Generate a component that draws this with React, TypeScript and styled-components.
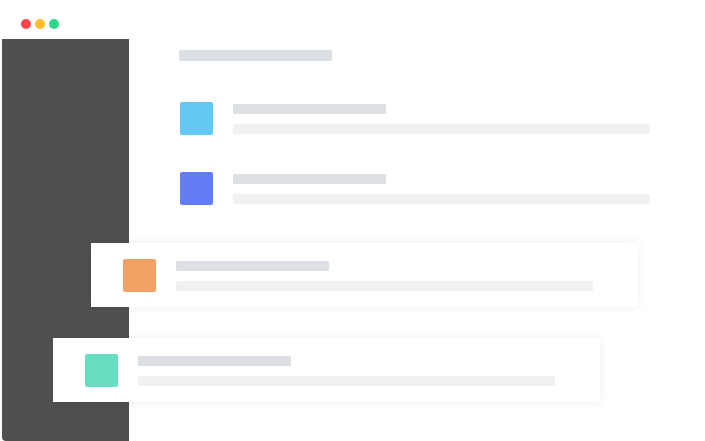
import React from "react";
import styled, { createGlobalStyle } from "styled-components";

const Global = createGlobalStyle`
  html, body { margin: 0; padding: 0; background: #ffffff; }
  body { font-family: "Liberation Sans", Arial, sans-serif; overflow: hidden; }
`;

const Window = styled.div`
  width: 705px;
  height: 441px;
  display: flex;
  flex-direction: column;
  background: #ffffff;
  overflow: hidden;
`;

const TitleBar = styled.div`
  height: 39px;
  display: flex;
  align-items: center;
  gap: 4px;
  padding: 9px 0 0 21px;
  box-sizing: border-box;
`;

const Dot = styled.span<{ $color: string }>`
  width: 10px;
  height: 10px;
  border-radius: 50%;
  background: ${(p) => p.$color};
`;

const Body = styled.div`
  flex: 1;
  display: flex;
  padding-left: 2px;
`;

const Sidebar = styled.aside`
  width: 127px;
  flex-shrink: 0;
  background: #505052;
  border-bottom-left-radius: 4px;
`;

const Main = styled.main`
  flex: 1;
  display: flex;
  flex-direction: column;
  align-items: flex-start;
  padding-top: 11px;
`;

const Heading = styled.div`
  width: 153px;
  height: 11px;
  background: #dce0e4;
  margin-left: 50px;
  border-radius: 1px;
`;

const Card = styled.div<{ $offset: number; $top: number; $raised?: boolean }>`
  position: relative;
  width: 547px;
  height: 64px;
  box-sizing: border-box;
  margin-left: ${(p) => p.$offset}px;
  margin-top: ${(p) => p.$top}px;
  padding: 0 45px 0 32px;
  display: flex;
  align-items: center;
  gap: 20px;
  background: ${(p) => (p.$raised ? "#ffffff" : "transparent")};
  box-shadow: ${(p) => (p.$raised ? "0 0 10px rgba(0, 0, 0, 0.07)" : "none")};
`;

const Swatch = styled.div<{ $color: string }>`
  width: 33px;
  height: 33px;
  flex-shrink: 0;
  border-radius: 2px;
  background: ${(p) => p.$color};
`;

const Lines = styled.div`
  flex: 1;
  display: flex;
  flex-direction: column;
  gap: 10px;
  margin-top: 1px;
`;

const TitleLine = styled.div`
  width: 153px;
  height: 10px;
  background: #dce0e4;
  border-radius: 1px;
`;

const TextLine = styled.div`
  width: 100%;
  height: 10px;
  background: #f0f1f3;
  border-radius: 1px;
`;

const rows = [
  { color: "#62c8f4", offset: 19, top: 25, raised: false },
  { color: "#637df5", offset: 19, top: 6, raised: false },
  { color: "#f3a065", offset: -38, top: 23, raised: true },
  { color: "#68dec0", offset: -76, top: 31, raised: true },
];

export default function App() {
  return (
    <>
      <Global />
      <Window>
        <TitleBar>
          <Dot $color="#fc4548" />
          <Dot $color="#fdbd2a" />
          <Dot $color="#2bd88a" />
        </TitleBar>
        <Body>
          <Sidebar />
          <Main>
            <Heading />
            {rows.map((r, i) => (
              <Card key={i} $offset={r.offset} $top={r.top} $raised={r.raised}>
                <Swatch $color={r.color} />
                <Lines>
                  <TitleLine />
                  <TextLine />
                </Lines>
              </Card>
            ))}
          </Main>
        </Body>
      </Window>
    </>
  );
}
